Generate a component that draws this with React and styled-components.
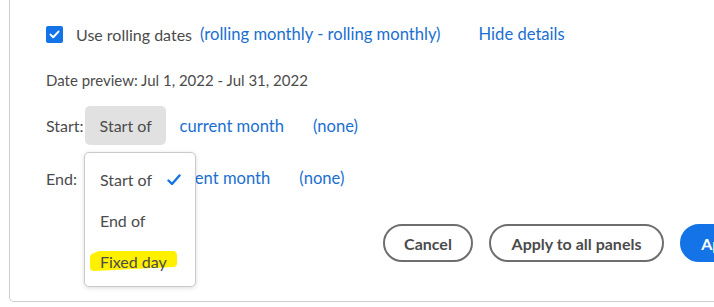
import React from "react";
import styled, { createGlobalStyle } from "styled-components";

const GlobalStyle = createGlobalStyle`
  html, body { margin: 0; padding: 0; background: #ffffff; overflow: hidden; }
  body { font-family: "Lato", "Open Sans", sans-serif; }
`;

const Page = styled.div`
  width: 714px;
  height: 307px;
  overflow: hidden;
  padding-left: 9px;
  box-sizing: border-box;
`;

const Panel = styled.div`
  width: 780px;
  height: 302px;
  box-sizing: border-box;
  border: 1px solid #cdcdcd;
  border-top: none;
  border-radius: 0 0 5px 5px;
  background: #fff;
  padding: 18px 24px 0 36px;
  display: flex;
  flex-direction: column;
  color: #4b4b4b;
  font-size: 16px;
`;

const Row = styled.div`
  display: flex;
  align-items: center;
  height: ${(p) => p.$h || 32}px;
  margin-top: ${(p) => p.$mt || 0}px;
  position: relative;
`;

const Box = styled.span`
  width: 17px;
  height: 17px;
  border-radius: 2px;
  background: #1473e6;
  display: inline-flex;
  align-items: center;
  justify-content: center;
  margin-right: 13px;
`;

const Text = styled.span`
  color: #4b4b4b;
  white-space: nowrap;
  font-size: ${(p) => p.$fs || 16}px;
  margin-right: ${(p) => p.$mr || 0}px;
`;

const Link = styled.span`
  color: #1a6fd0;
  white-space: nowrap;
  font-size: 16.6px;
  margin-left: ${(p) => p.$ml || 0}px;
`;

const Picker = styled.span`
  position: relative;
  display: inline-flex;
  align-items: center;
  flex: none;
  height: 39px;
  padding: 0 0 0 15px;
  border-radius: 5px;
  background: ${(p) => (p.$active ? "#e1e1e1" : "transparent")};
  color: #4b4b4b;
  box-sizing: border-box;
  white-space: nowrap;
  width: ${(p) => p.$w}px;
`;

const Menu = styled.div`
  position: absolute;
  left: 0;
  top: -7px;
  width: 112px;
  box-sizing: border-box;
  background: #fff;
  border: 1px solid #cacaca;
  border-radius: 5px;
  box-shadow: 0 1px 4px rgba(0, 0, 0, 0.15);
  padding: 6px 0 4px;
  z-index: 2;
`;

const Item = styled.div`
  position: relative;
  height: 41px;
  display: flex;
  align-items: center;
  padding-left: 15px;
  color: #4b4b4b;
  white-space: nowrap;
`;

const Check = styled.svg`
  position: absolute;
  left: 82px;
  top: 15px;
`;

const Mark = styled.span`
  position: relative;
  z-index: 0;
`;

const Highlight = styled.svg`
  position: absolute;
  left: -11px;
  top: -2px;
  z-index: -1;
`;

const Footer = styled.div`
  display: flex;
  justify-content: flex-end;
  gap: 16px;
  margin-top: 30px;
`;

const Pill = styled.button`
  height: 38px;
  border-radius: 19px;
  box-sizing: border-box;
  font-family: "Lato", "Open Sans", sans-serif;
  font-size: 16px;
  font-weight: 700;
  padding: 0;
  border: 2px solid ${(p) => (p.$primary ? "#1473e6" : "#6e6e6e")};
  background: ${(p) => (p.$primary ? "#1473e6" : "#fff")};
  color: ${(p) => (p.$primary ? "#fff" : "#4b4b4b")};
  width: ${(p) => p.$w}px;
  white-space: nowrap;
`;

export default function App() {
  return (
    <>
      <GlobalStyle />
      <Page>
        <Panel>
          <Row $h={32}>
            <Box>
              <svg width="11" height="9" viewBox="0 0 11 9">
                <path d="M1.5 4.6 L4.2 7.2 L9.5 1.6" fill="none" stroke="#fff" strokeWidth="2" strokeLinecap="round" strokeLinejoin="round" />
              </svg>
            </Box>
            <Text>Use rolling dates</Text>
            <Link $ml={8}>(rolling monthly - rolling monthly)</Link>
            <Link $ml={38}>Hide details</Link>
          </Row>
          <Row $h={24} $mt={18}>
            <Text $fs={15}>Date preview: Jul 1, 2022 - Jul 31, 2022</Text>
          </Row>
          <Row $h={39} $mt={14}>
            <Text $mr={1}>Start:</Text>
            <Picker $active $w={81}>Start of</Picker>
            <Link $ml={14}>current month</Link>
            <Link $ml={29}>(none)</Link>
          </Row>
          <Row $h={32} $mt={17}>
            <Text $mr={7}>End:</Text>
            <Picker $w={81}>
              Start of
              <Menu>
                <Item>
                  Start of
                  <Check width="14" height="12" viewBox="0 0 14 12">
                    <path d="M1.5 6.5 L5 10 L12.5 1.5" fill="none" stroke="#1473e6" strokeWidth="2.4" strokeLinecap="round" strokeLinejoin="round" />
                  </Check>
                </Item>
                <Item>End of</Item>
                <Item>
                  <Mark>
                    <Highlight width="90" height="24" viewBox="0 0 90 24">
                      <path d="M10 1 L84 1 Q88 1 88 6 L88 13 Q88 17 84 17 L5 21 Q1 21 1 17 L1 8 Q1 4 5 3 Z" fill="#fff000" />
                    </Highlight>
                    Fixed day
                  </Mark>
                </Item>
              </Menu>
            </Picker>
            <Link $ml={1}>current month</Link>
            <Link $ml={29}>(none)</Link>
          </Row>
          <Footer>
            <Pill $w={90}>Cancel</Pill>
            <Pill $w={175}>Apply to all panels</Pill>
            <Pill $primary $w={84}>Apply</Pill>
          </Footer>
        </Panel>
      </Page>
    </>
  );
}
